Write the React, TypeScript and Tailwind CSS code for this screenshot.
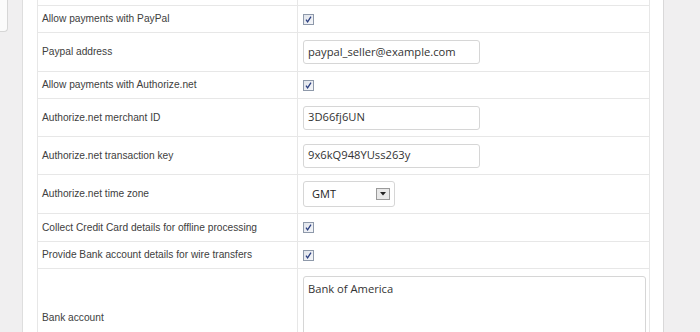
import React from "react";

const labelFont = { fontFamily: '"Liberation Sans", Arial, sans-serif' };

function Check() {
  return (
    <svg width="11" height="11" viewBox="0 0 11 11" className="block">
      <defs>
        <linearGradient id="cbg" x1="0" y1="0" x2="1" y2="1">
          <stop offset="0" stopColor="#dfe3ea" />
          <stop offset="1" stopColor="#f6f7fa" />
        </linearGradient>
      </defs>
      <rect x="0.5" y="0.5" width="10" height="10" fill="url(#cbg)" stroke="#8e99aa" />
      <path d="M3 5.6 L4.6 7.8 L8 2.6" fill="none" stroke="#2b3f80" strokeWidth="1.3" />
    </svg>
  );
}

function Row({
  h,
  label,
  children,
  last,
}: {
  h: string;
  label?: string;
  children?: React.ReactNode;
  last?: boolean;
}) {
  return (
    <div className={`flex ${h} ${last ? "" : "border-b border-[#e7e7e7]"}`}>
      <div className="w-[260px] shrink-0 border-r border-[#e7e7e7] pl-[4px] flex items-center text-[10.2px] text-[#404040]" style={labelFont}>
        {label}
      </div>
      <div className="flex-1 pl-[5px] flex items-center">{children}</div>
    </div>
  );
}

function TextInput({ value }: { value: string }) {
  return (
    <div className="w-[177px] h-[24px] border border-[#d6d6d6] rounded-[3px] bg-white flex items-center pl-[4px] text-[11.2px] text-[#333]" style={{ fontFamily: '"Open Sans", sans-serif' }}>
      {value}
    </div>
  );
}

export default function App() {
  return (
    <div className="w-[700px] h-[332px] overflow-hidden bg-[#f0eff0] flex">
      <div className="w-[22px] shrink-0">
        <div className="w-[8px] h-[32px] bg-[#fbfbfb] border-r border-b border-[#d6d6d6] rounded-br-[4px]" />
      </div>
      <div className="w-[642px] shrink-0 bg-white border-l border-[#dedede] border-r border-r-[#d9d8d9] pl-[14px] pr-[13px]">
        <div className="border-l border-r border-[#e7e7e7]">
          <Row h="h-[6px]" />
          <Row h="h-[27px]" label="Allow payments with PayPal">
            <Check />
          </Row>
          <Row h="h-[39px]" label="Paypal address">
            <TextInput value="paypal_seller@example.com" />
          </Row>
          <Row h="h-[27px]" label="Allow payments with Authorize.net">
            <Check />
          </Row>
          <Row h="h-[38px]" label="Authorize.net merchant ID">
            <TextInput value="3D66fj6UN" />
          </Row>
          <Row h="h-[38px]" label="Authorize.net transaction key">
            <TextInput value="9x6kQ948YUss263y" />
          </Row>
          <Row h="h-[39px]" label="Authorize.net time zone">
            <div className="w-[92px] h-[26px] border border-[#d6d6d6] rounded-[3px] bg-white flex items-center pl-[8px] pr-[4px] text-[11px] text-[#222]" style={{ fontFamily: '"Open Sans", sans-serif' }}>
              <span className="flex-1">GMT</span>
              <span className="w-[14px] h-[12px] border border-[#9a9a9a] bg-[#e8e8e8] flex items-center justify-center">
                <svg width="6" height="4" viewBox="0 0 6 4" className="block">
                  <path d="M0 0 H6 L3 3.5 Z" fill="#222" />
                </svg>
              </span>
            </div>
          </Row>
          <Row h="h-[28px]" label="Collect Credit Card details for offline processing">
            <Check />
          </Row>
          <Row h="h-[27px]" label="Provide Bank account details for wire transfers">
            <Check />
          </Row>
          <Row h="h-[98px]" label="Bank account" last>
            <div className="w-[343px] h-[82px] self-start mt-[7px] border border-[#d6d6d6] rounded-[3px] bg-white pl-[4px] pt-[4px] text-[11.2px] text-[#333]" style={{ fontFamily: '"Open Sans", sans-serif' }}>
              Bank of America
            </div>
          </Row>
        </div>
      </div>
    </div>
  );
}
